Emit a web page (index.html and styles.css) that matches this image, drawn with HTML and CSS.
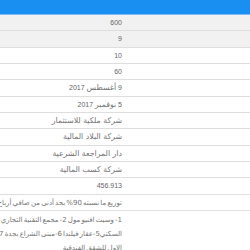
FILE: index.html
```html
<!DOCTYPE html>
<html lang="ar">
<head>
<meta charset="utf-8">
<link rel="stylesheet" href="styles.css">
</head>
<body>
<div class="table">
  <div class="head"></div>
  <div class="row alt">600</div>
  <div class="row alt">9</div>
  <div class="row">10</div>
  <div class="row">60</div>
  <div class="row">9 <span class="ar">أغسطس</span> 2017</div>
  <div class="row">5 <span class="ar">نوفمبر</span> 2017</div>
  <div class="row"><span class="ar">شركة ملكية للاستثمار</span></div>
  <div class="row"><span class="ar">شركة البلاد المالية</span></div>
  <div class="row"><span class="ar">دار المراجعة الشرعية</span></div>
  <div class="row"><span class="ar">شركة كسب المالية</span></div>
  <div class="row">456.913</div>
  <div class="row"><span class="ar long">توزيع ما نسبته 90% بحد أدنى من صافي أرباح الصندوق</span></div>
  <div class="row multi"><span class="ar long">1- وسيت افنيو مول 2- مجمع التقنية التجاري 3- مجمع الملك فهد<br>السكني5-عقار فيلندا 6-مبنى الشراع بجدة 7-مبنى الخالدية<br>الاول للشقق الفندقية</span></div>
</div>
</body>
</html>
```
FILE: styles.css
```css
html, body {
  margin: 0;
  padding: 0;
  background: #ffffff;
  overflow: hidden;
}
.table {
  width: 250px;
  direction: rtl;
  font-family: "Liberation Sans", "DejaVu Sans", sans-serif;
  font-size: 7px;
  color: #666666;
}
.ar {
  font-family: "DejaVu Sans", sans-serif;
  font-size: 7.8px;
  color: #747474;
}
.long {
  font-size: 7px;
  word-spacing: -1.1px;
}
.head {
  height: 14px;
  background: #1a8ff2;
  border-bottom: 1px solid #7dbcf4;
}
.row {
  height: 15.33px;
  line-height: 15.33px;
  padding-right: 128px;
  border-bottom: 1px solid #dedede;
  white-space: nowrap;
  text-align: right;
}
.alt {
  background: #f1f1f1;
}
.multi {
  height: auto;
  line-height: 13px;
  padding-top: 2px;
  padding-bottom: 4px;
}
```
